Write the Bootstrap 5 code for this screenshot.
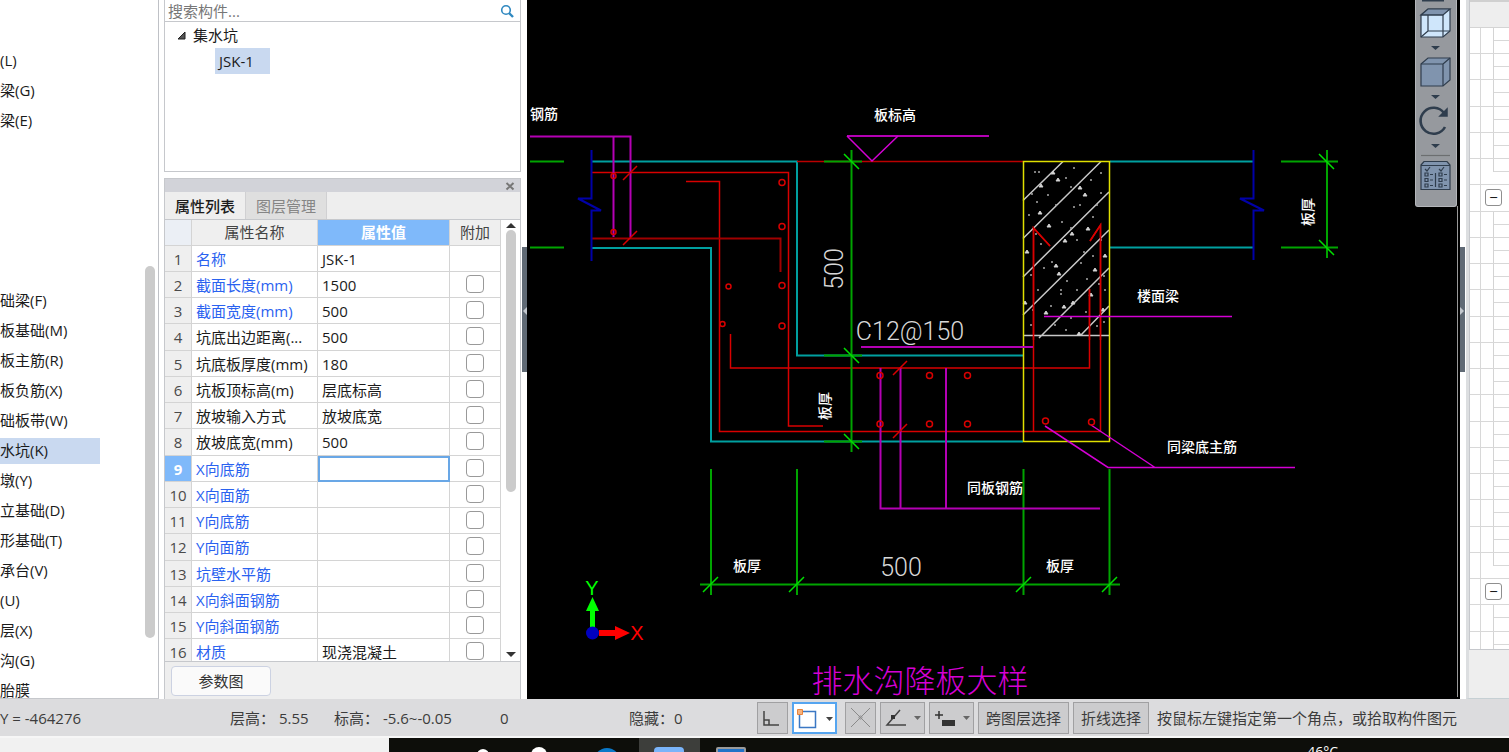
<!DOCTYPE html>
<html lang="zh-CN">
<head>
<meta charset="utf-8">
<meta name="viewport" content="width=device-width, initial-scale=1">
<title>集水坑 JSK-1</title>
<link rel="stylesheet" href="https://cdn.jsdelivr.net/npm/bootstrap@5.3.0/dist/css/bootstrap.min.css">
<style>
  body { font: 15px/26px "Open Sans", "Noto Sans CJK SC", sans-serif; color: #1b1b1b; background: #fff; }
  button { font: inherit; color: inherit; }
  .line-r { border-right: 1px solid #bfc1c6; }
  .line-all { border: 1px solid #c6c8cc; }

  /* component tree on the far left */
  .tree-nav { width: 159px; border-bottom: 1px solid #c6c8cc; }
  .tree-nav a { flex-shrink: 0; height: 26px; line-height: 25px; margin-bottom: 4px; width: 100px; color: #1b1b1b; white-space: nowrap; }
  .tree-nav a.active { background: #c9d9f0; }
  .tree-nav .first { margin-top: 48px; }
  .tree-nav .later { margin-top: 150px; }
  .thumb { width: 10px; border-radius: 5px; background: #cbcbcb; }
  .nav-thumb { height: 372px; margin: 266px 3px 0 0; }

  /* middle column */
  .mid { width: 357px; margin-left: 5px; gap: 6px; }
  .finder { height: 172px; border-top: 0; }
  .finder .search { height: 22px; border-bottom: 1px solid #c6c8cc; }
  .finder input { font: inherit; line-height: 20px; height: 20px; padding: 0 3px; }
  .finder input::placeholder { color: #777; opacity: 1; }
  .picked { background: #c9d9f0; width: 55px; margin-left: 50px; padding-left: 4px; }
  .titlebar { height: 13px; background: #d2d3d9; }
  .tabs { height: 27px; background: #eee; }
  .tabs button { border: 0; border-right: 1px solid #d0d0d2; background: #eee; width: 81px; padding: 0; }
  .tabs button.dim { background: #dfdfdf; color: #858585; }
  .tabs .active { font-weight: 500; }
  .grid-wrap { min-height: 0; border-top: 1px solid #c6c8cc; border-bottom: 1px solid #c6c8cc; }
  .props { table-layout: fixed; width: 336px; border-collapse: separate; border-spacing: 0; }
  .props th, .props td { height: 26px; padding: 0 4px; line-height: 24px; border-right: 1px solid #d4d4d4; border-bottom: 1px solid #d4d4d4; white-space: nowrap; overflow: hidden; font-weight: 400; }
  .props tbody tr:nth-child(4n) > * { height: 27px; }
  .props thead th { background: #efefef; text-align: center; color: #444; line-height: 25px; }
  .props thead th:first-child { background: #ebeff5; }
  .props thead .hot { background: #7fb9fa; color: #fff; font-weight: 700; }
  .props tbody th { background: #efefef; text-align: center; color: #4a4a4a; padding: 0; }
  .props .key { color: #2a62f0; }
  .props .on th { background: #7fb9fa; color: #fff; font-weight: 700; }
  .props .on .val { border: 2px solid #69a7e6; }
  .props .form-check-input { display: block; float: none; margin: 0 auto 2px; width: 18px; height: 18px; border: 1px solid #999; border-radius: 4px; }
  .scroller { width: 19px; }
  .scroller .thumb { height: 262px; margin-bottom: auto; }
  .foot { height: 37px; background: #eee; }
  .foot button { width: 100px; height: 30px; background: #fafafa; border: 1px solid #ccd2e2; border-radius: 4px; margin-left: 6px; color: #333; padding: 0; }

  .splitter { width: 6px; padding-top: 247px; }
  .splitter button { display: block; width: 5px; height: 125px; border: 0; padding: 0; background: #606a75; }
  .splitter.left button { margin-left: 1px; }

  /* drawing canvas */
  .canvas { background: #000; min-width: 0; }
  .canvas text { font-family: "Noto Sans CJK SC", sans-serif; font-size: 14px; font-weight: 500; fill: #fff; text-anchor: middle; }
  .canvas .dim-text { font-family: Roboto, "Liberation Sans", sans-serif; font-size: 25px; font-weight: 300; fill: #d8d8d8; }
  .canvas .caption-text { font-size: 31px; font-weight: 300; fill: #d400d4; }
  .canvas .axis-text { font-family: "Liberation Sans", sans-serif; font-size: 20px; }
  .view-tools { top: 0; right: 3px; width: 42px; height: 207px; background: #96999e; border: 1px solid #b4b6ba; border-top: 0; border-radius: 0 0 3px 3px; }
  .view-tools svg { display: block; }

  /* right-hand panel */
  .side { width: 43px; border-left: 3px solid #dcdee0; background: #eee; border-bottom: 1px solid #c6d0d4; }
  .rows { height: 650px; border-left: 1px solid #c6c8cc; border-bottom: 1px solid #c6c8cc; background: #fff; }
  .rows .cap { height: 28px; background: #eee; border-top: 2px solid #d0d0d0; border-bottom: 1px solid #d4d4d4; }
  .rows .item { height: 26px; border-bottom: 1px solid #d8d8d8; }
  .rows .item:nth-child(4n) { height: 27px; }
  .rows .gut { width: 11px; border-right: 1px solid #d8d8d8; }
  .rows .twig { width: 12px; }
  .rows .leaf { border-left: 1px solid #d4d4d4; }
  .rows .leaf::before { content: ""; display: block; height: 13px; border-bottom: 1px solid #d8d8d8; }
  .rows .leaf.end { height: 13px; }
  .rows .fold { width: 17px; height: 17px; margin: 4px 0 0 4px; padding: 0; border: 1px solid #8f8f8f; border-radius: 3px; background: #fff; line-height: 13px; }

  /* status bar and task bar */
  .status { height: 39px; background: #dcdcde; border-bottom: 2px solid #f6f6f6; color: #3c3c3c; white-space: nowrap; }
  .status .tool { height: 32px; background: #ccccce; border: 1px solid #a0a0a2; padding: 0; }
  .status .tool.small-tool { width: 31px; }
  .status .tool.wide-tool { width: 45px; }
  .status .tool.word { padding: 0 7px; }
  .status .tool.active { background: #fff; border: 2px solid #55a5f0; }
  .status svg { display: block; }
  .s1 { width: 230px; } .s2 { width: 104px; } .s3 { width: 166px; } .s4 { width: 129px; } .s5 { width: 128px; }
  .taskbar { height: 14px; background: #f1f1f1; }
  .taskbar .dark { margin-left: 389px; background: #0d0e0a; color: #fff; }
  .temp { font-size: 14px; line-height: 28px; margin-right: 171px; }
</style>
</head>
<body class="vh-100 overflow-hidden d-flex flex-column">

<main class="d-flex flex-grow-1 overflow-hidden">
  <nav class="tree-nav line-r d-flex flex-shrink-0 overflow-hidden">
    <div class="flex-grow-1 d-flex flex-column">
      <a href="#" class="first text-decoration-none">(L)</a>
      <a href="#" class="text-decoration-none">梁(G)</a>
      <a href="#" class="text-decoration-none">梁(E)</a>
      <a href="#" class="later text-decoration-none">础梁(F)</a>
      <a href="#" class="text-decoration-none">板基础(M)</a>
      <a href="#" class="text-decoration-none">板主筋(R)</a>
      <a href="#" class="text-decoration-none">板负筋(X)</a>
      <a href="#" class="text-decoration-none">础板带(W)</a>
      <a href="#" class="active text-decoration-none">水坑(K)</a>
      <a href="#" class="text-decoration-none">墩(Y)</a>
      <a href="#" class="text-decoration-none">立基础(D)</a>
      <a href="#" class="text-decoration-none">形基础(T)</a>
      <a href="#" class="text-decoration-none">承台(V)</a>
      <a href="#" class="text-decoration-none">(U)</a>
      <a href="#" class="text-decoration-none">层(X)</a>
      <a href="#" class="text-decoration-none">沟(G)</a>
      <a href="#" class="text-decoration-none">胎膜</a>
    </div>
    <div class="thumb nav-thumb flex-shrink-0"></div>
  </nav>

  <section class="mid d-flex flex-column flex-shrink-0">
    <div class="finder line-all flex-shrink-0">
      <div class="search d-flex align-items-center">
        <input type="search" class="border-0 flex-grow-1" placeholder="搜索构件..." aria-label="搜索构件">
        <svg class="me-1" width="18" height="18" viewBox="0 0 18 18" fill="none" stroke="#2f88c0"><circle cx="8" cy="8" r="4.3" stroke-width="1.6"/><path d="M11 11l4 4" stroke-width="2.4"/></svg>
      </div>
      <div class="d-flex align-items-center">
        <svg class="ms-2" width="20" height="26" viewBox="0 0 20 26"><path d="M5 17L12 10V17Z" fill="#555" stroke="#222"/></svg><span>集水坑</span>
      </div>
      <div class="picked">JSK-1</div>
    </div>

    <div class="line-all d-flex flex-column flex-grow-1 overflow-hidden border-bottom-0">
      <div class="titlebar d-flex justify-content-end align-items-center flex-shrink-0">
        <svg class="me-1" width="12" height="12" viewBox="0 0 12 12" stroke="#777" stroke-width="2"><path d="M2.500 3l7 6.500M9.500 3l-7 6.500"/></svg>
      </div>
      <div class="tabs d-flex flex-shrink-0">
        <button class="active">属性列表</button><button class="dim">图层管理</button>
      </div>
      <div class="grid-wrap d-flex flex-grow-1 overflow-hidden">
        <div class="overflow-hidden">
          <table class="props">
            <colgroup><col style="width:27px"><col style="width:126px"><col style="width:132px"><col style="width:51px"></colgroup>
            <thead><tr><th></th><th>属性名称</th><th class="hot">属性值</th><th>附加</th></tr></thead>
            <tbody id="props"></tbody>
          </table>
        </div>
        <div class="scroller d-flex flex-column align-items-center">
          <svg width="12" height="10" viewBox="0 0 12 10" class="flex-shrink-0"><path d="M6 3l5 5H1z" fill="#333"/></svg>
          <div class="thumb"></div>
          <svg width="12" height="12" viewBox="0 0 12 12" class="flex-shrink-0"><path d="M6 8l5-5H1z" fill="#333"/></svg>
        </div>
      </div>
      <div class="foot d-flex align-items-center flex-shrink-0"><button>参数图</button></div>
    </div>
  </section>

  <div class="splitter left flex-shrink-0"><button aria-label="收起左侧"><svg width="5" height="10" viewBox="0 0 5 10"><path d="M5 1v8L1 5z" fill="#c3c8ce"/></svg></button></div>

  <section class="canvas position-relative flex-grow-1">
    <svg class="d-block w-100 h-100" viewBox="527 0 933 699" preserveAspectRatio="xMinYMin meet" fill="none" stroke-width="1.500">
      <defs><clipPath id="page"><path d="M530 0H1460V696H530Z"/></clipPath></defs>
      <g clip-path="url(#page)">
        <!-- slab and pit outline -->
        <path stroke="#00a0a0" stroke-width="2" d="M591 161.500H797V355.500H1023M592 248H711V441.500H1023"/>
        <path stroke="#00a0a0" stroke-width="2" d="M1110 161.500H1254M1110 247.500H1254"/>
        <path stroke="#b00" d="M797 161.500H1023"/>
        <!-- reinforcement -->
        <path stroke="#d80000" d="M592 172.500H788.500V426H823M686 181.500H719.500V431.500H1100.500V225L1090 241M730.500 334V368H1089.500V289M1033.500 431V228L1050 246"/>
        <path stroke="#a00000" stroke-width="2" d="M592 238.500H780.500V272"/>
        <!-- beam hatch -->
        <g stroke="#c8c8c8">
          <path d="M1023 200.500L1063 161.500M1023 238.500L1101 161.500M1023 277L1109 192M1023 315L1109 230M1039 338L1109 268M1081 335L1109 306M1023 335.500H1109"/>
        </g>
        <g id="gravel"></g>
        <path stroke="#d80000" d="M1033.500 340V228L1050 246M1100.500 340V225L1090 241M1089.500 340V289"/>
        <path stroke="#e0e000" d="M1023.500 161.500H1109.500V441.500H1023.500Z"/>
        <!-- break lines -->
        <path stroke="#0000a8" stroke-width="2" d="M591.500 150V198.500H578L601 210.500H591.500V261M1253.500 150V198.500H1240L1264 210.500H1253.500V260"/>
        <!-- dimensions -->
        <g stroke="#00a400" stroke-width="2">
          <path d="M530 161.500H564M530 247.500H564M851.500 150V452M824 161.500H862M824 355.500H862M824 441.500H862"/>
          <path d="M711 469V595M797 469V595M1023.500 469V595M1109.500 469V595M700 584.500H1120"/>
          <path d="M1327 150V258M1281 161.500H1338M1281 247.500H1338"/>
        </g>
        <path stroke="#00e000" d="M844 154l15 15M844 348l15 15M844 434l15 15M1319 154l15 15M1319 240l15 15M703 592l15-15M789 592l15-15M1016 592l15-15M1102 592l15-15"/>
        <!-- leaders -->
        <g stroke="#b400b4">
          <path d="M530 136.500H630.500V237M613.500 136V237M847 136H989M861 347H1033M880.500 368V508.500H1100M900.500 368V508M946 368V508" stroke-width="2"/>
          <path d="M847 136L872 161L898 136M1044 316.500H1232M1045 426L1108 467.500H1295M1091 425L1155 467.500" stroke="#d400d4"/>
        </g>
        <g stroke="#d80000">
          <path d="M623 180l14-14M623 245l14-14M893 375l14-14M893 438l14-14"/>
          <circle cx="613.500" cy="176" r="2.500"/><circle cx="613.500" cy="232" r="2.500"/>
          <circle cx="782" cy="182.500" r="3"/><circle cx="782" cy="226.500" r="3"/><circle cx="782" cy="285.500" r="3"/><circle cx="782" cy="326" r="3"/>
          <circle cx="728.500" cy="286.500" r="2.500"/><circle cx="722.500" cy="324" r="2.500"/>
          <circle cx="880" cy="375.500" r="3"/><circle cx="929.500" cy="375.500" r="3"/><circle cx="967.500" cy="375.500" r="3"/>
          <circle cx="880" cy="424" r="3"/><circle cx="929.500" cy="424" r="3"/><circle cx="967.500" cy="424" r="3"/>
          <circle cx="1045.500" cy="421" r="3"/><circle cx="1091.500" cy="422" r="3"/>
        </g>
        <!-- labels -->
        <text x="544" y="119">钢筋</text>
        <text x="895" y="120">板标高</text>
        <text x="1158" y="301">楼面梁</text>
        <text x="995" y="493">同板钢筋</text>
        <text x="1202" y="452">同梁底主筋</text>
        <text x="747" y="571">板厚</text>
        <text x="1060" y="571">板厚</text>
        <text transform="translate(830 406) rotate(-90)">板厚</text>
        <text transform="translate(1313 212) rotate(-90)">板厚</text>
        <text class="dim-text" x="901" y="576">500</text>
        <text class="dim-text" x="910" y="340">C12@150</text>
        <text class="dim-text" transform="translate(843 269) rotate(-90)">500</text>
        <text class="caption-text" x="920" y="692">排水沟降板大样</text>
        <!-- axes -->
        <path fill="#0f0" d="M590 627V611H586L592.500 597L599 611H595V627Z"/>
        <path fill="#f00" d="M599 630H615V626L630 633L615 640V636H599Z"/>
        <circle cx="592.500" cy="633" r="6.500" fill="#0000c0"/>
        <text class="axis-text" x="592" y="595" style="fill:#0f0">Y</text>
        <text class="axis-text" x="637" y="640" style="fill:#f00">X</text>
      </g>
      <path d="M1457.500 206V697" stroke="#999" stroke-width="1"/>
    </svg>

    <div class="view-tools position-absolute">
      <svg width="41" height="206" viewBox="1416 0 41 206" fill="none" stroke="#2f3d4d" stroke-width="1.200">
        <path d="M1422 0.500h22" stroke-width="2"/>
        <path fill="#cfe6fb" d="M1421 15L1428 9H1450V31L1443 37H1421Z"/>
        <path fill="#8094ae" d="M1421 15L1428 9H1450L1443 15Z"/>
        <path d="M1443 15V37M1443 15H1421M1428 15V31H1450M1428 31L1421 37"/>
        <path fill="#8094ae" d="M1421 64L1428 58H1450V80L1443 86H1421Z"/><path d="M1421 64H1443V86M1443 64L1450 58"/>
        <path fill="#2f3d4d" stroke="none" d="M1431 46h9l-4.500 4zM1431 95h9l-4.500 4zM1431 144h9l-4.500 4z"/>
        <path d="M1445 127A13 13 0 1 1 1444 113" stroke-width="2.600"/><path d="M1447 109V116H1440Z" fill="#2f3d4d" stroke-width="1.500"/>
        <path d="M1421 155.500H1450" stroke="#6c6e70"/>
        <path fill="#8094ae" d="M1421 165L1424 161.500H1447L1450 165V189.500H1421Z"/>
        <path d="M1421 165.500H1450M1435.500 173V187M1425 169l2 2 3-4M1439 169l2 2 3-4M1425 173h3v3h-3zM1425 178.500h3v3h-3zM1425 184h3v3h-3zM1439 173h3v3h-3zM1439 178.500h3v3h-3zM1439 184h3v3h-3zM1430 174.500h3M1430 180h3M1430 185.500h3M1444 174.500h3M1444 180h3M1444 185.500h3"/>
      </svg>
    </div>
  </section>

  <div class="splitter flex-shrink-0"><button aria-label="收起右侧"><svg width="5" height="10" viewBox="0 0 5 10"><path d="M0 1v8L4 5z" fill="#c3c8ce"/></svg></button></div>

  <aside class="side flex-shrink-0 overflow-hidden"><div class="rows overflow-hidden" id="rows"><div class="cap"></div></div></aside>
</main>

<footer class="flex-shrink-0">
  <div class="status d-flex align-items-center overflow-hidden">
    <div class="s1 flex-shrink-0">Y = -464276</div>
    <div class="s2 flex-shrink-0">层高： 5.55</div>
    <div class="s3 flex-shrink-0">标高： -5.6~-0.05</div>
    <div class="s4 flex-shrink-0">0</div>
    <div class="s5 flex-shrink-0">隐藏：0</div>
    <div class="d-flex gap-1 align-items-center">
      <button class="tool small-tool" aria-label="正交"><svg width="29" height="30" viewBox="0 0 29 30" fill="none" stroke="#444" stroke-width="1.500"><path d="M6 8V22H21M6 17H11V22"/></svg></button>
      <button class="tool wide-tool active me-1" aria-label="矩形选择"><svg width="41" height="28" viewBox="0 0 41 28"><path d="M5.500 7.500H21.500V23.500H5.500Z" fill="none" stroke="#3b78c4" stroke-width="1.500"/><path d="M3.500 5.500h5v5h-5z" fill="#f7b27c" stroke="#e8833a"/><path d="M32 13h7l-3.500 4z" fill="#444"/></svg></button>
      <button class="tool small-tool" aria-label="交点"><svg width="29" height="30" viewBox="0 0 29 30" fill="none" stroke="#8a8a8a"><path d="M5 5L24 24M24 5L5 24"/><circle cx="14.500" cy="14.500" r="1.500"/></svg></button>
      <button class="tool wide-tool" aria-label="角度"><svg width="43" height="30" viewBox="0 0 43 30"><path d="M19 7L6 22H25" fill="none" stroke="#444" stroke-width="1.500"/><path d="M10 12h4v4h-4z" fill="#333"/><path d="M33 13h7l-3.500 4z" fill="#666"/></svg></button>
      <button class="tool wide-tool" aria-label="点输入"><svg width="43" height="30" viewBox="0 0 43 30"><path d="M5 12h8M9 8v8" stroke="#333" stroke-width="1.500"/><path d="M12 17h13v6H12z" fill="#333"/><path d="M33 13h7l-3.500 4z" fill="#666"/></svg></button>
      <button class="tool word">跨图层选择</button>
      <button class="tool word">折线选择</button>
      <span class="ms-1">按鼠标左键指定第一个角点，或拾取构件图元</span>
    </div>
  </div>
  <div class="taskbar overflow-hidden">
    <div class="dark h-100 d-flex justify-content-between">
      <svg width="400" height="14" viewBox="389 738 400 14" class="flex-shrink-0">
        <path d="M639 738h61v14h-61z" fill="#3d3e3b"/>
        <circle cx="483" cy="755" r="6" fill="#fff"/><circle cx="539" cy="755" r="8" fill="#fff"/><circle cx="607" cy="761" r="13" fill="#0a78c8"/>
        <rect x="654" y="747" width="30" height="12" rx="4" fill="#7ab4fa"/>
        <rect x="716" y="747" width="30" height="12" rx="2" fill="#9a9a9a"/><path d="M718 749h26v4h-26z" fill="#2273c8"/>
      </svg>
      <span class="temp">46°C</span>
    </div>
  </div>
</footer>

<script src="https://cdn.jsdelivr.net/npm/bootstrap@5.3.0/dist/js/bootstrap.bundle.min.js"></script>
<script>
  // [name, value, editable key shown in blue]
  const props = [
    ['名称', 'JSK-1', 1], ['截面长度(mm)', '1500', 1], ['截面宽度(mm)', '500', 1], ['坑底出边距离(...', '500', 0],
    ['坑底板厚度(mm)', '180', 0], ['坑板顶标高(m)', '层底标高', 0], ['放坡输入方式', '放坡底宽', 0], ['放坡底宽(mm)', '500', 0],
    ['X向底筋', '', 1], ['X向面筋', '', 1], ['Y向底筋', '', 1], ['Y向面筋', '', 1],
    ['坑壁水平筋', '', 1], ['X向斜面钢筋', '', 1], ['Y向斜面钢筋', '', 1], ['材质', '现浇混凝土', 1]
  ];
  document.getElementById('props').innerHTML = props.map(([name, value, key], i) =>
    `<tr class="${i === 8 ? 'on' : ''}"><th scope="row">${i + 1}</th><td class="${key ? 'key' : ''}">${name}</td>` +
    `<td class="val">${value}</td><td>${i ? `<input type="checkbox" class="form-check-input" aria-label="附加 ${name}">` : ''}</td></tr>`).join('');

  // tree rows of the right panel: rows 6 and 21 open a group
  const groups = [6, 21];
  document.getElementById('rows').insertAdjacentHTML('beforeend', Array.from({ length: 24 }, (_, i) =>
    `<div class="item d-flex"><div class="gut flex-shrink-0"></div>` + (groups.includes(i)
      ? '<button class="fold flex-shrink-0" aria-label="折叠">−</button>'
      : `<div class="twig flex-shrink-0"></div><div class="leaf flex-grow-1 ${groups.includes(i + 1) ? 'end' : ''}"></div>`) + '</div>').join(''));

  // gravel in the concrete beam: large stones, then sand
  const stones = [[1053,173],[1058,180],[1041,186],[1080,188],[1085,195],[1040,213],[1049,226],[1065,241],[1072,234],[1088,229],[1027,252],[1105,256],[1056,266],[1059,274],[1095,270],[1025,303],[1091,295],[1046,313],[1064,307],[1073,303],[1103,310],[1079,334]];
  const sand = [[1034,172],[1038,172],[1073,168],[1065,178],[1100,173],[1090,180],[1031,194],[1036,202],[1055,205],[1070,187],[1073,207],[1079,205],[1100,193],[1092,217],[1061,222],[1035,234],[1076,240],[1100,240],[1070,228],[1051,262],[1043,268],[1080,263],[1086,279],[1066,281],[1030,275],[1037,290],[1060,290],[1060,294],[1076,290],[1098,284],[1104,290],[1032,310],[1050,306],[1070,318],[1085,312],[1030,325],[1054,325],[1065,330],[1096,326],[1103,322],[1040,244],[1083,252],[1096,205],[1047,195],[1028,215],[1103,276],[1092,256]];
  document.getElementById('gravel').innerHTML =
    stones.map(([x, y]) => `<path d="M${x - 2} ${y + 1}l2-3 2 3z" fill="#ddd" stroke="#ccc" stroke-width="1"/>`).join('') +
    sand.map(([x, y]) => `<path d="M${x} ${y}h2" stroke="#aaa"/>`).join('');
</script>
</body>
</html>
